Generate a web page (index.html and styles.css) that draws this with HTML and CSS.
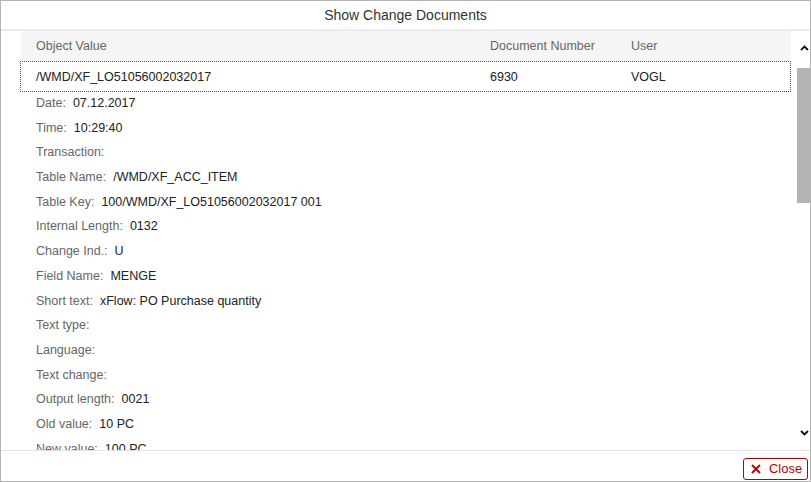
FILE: index.html
```html
<!DOCTYPE html>
<html lang="en">
<head>
    <meta charset="UTF-8">
    <title>Show Change Documents</title>
    <link rel="stylesheet" href="styles.css">
</head>
<body>
    <div class="dialog">
        <div class="dialog-title">Show Change Documents</div>

        <div class="dialog-body">
            <div class="scroll-area">
                <div class="doc-table">
                    <div class="doc-row doc-head">
                        <div class="col-object">Object Value</div>
                        <div class="col-number">Document Number</div>
                        <div class="col-user">User</div>
                    </div>
                    <div class="doc-row doc-selected">
                        <div class="col-object">/WMD/XF_LO51056002032017</div>
                        <div class="col-number">6930</div>
                        <div class="col-user">VOGL</div>
                    </div>
                </div>

                <div class="details">
                    <div class="detail"><span class="label">Date:</span><span class="value">07.12.2017</span></div>
                    <div class="detail"><span class="label">Time:</span><span class="value">10:29:40</span></div>
                    <div class="detail"><span class="label">Transaction:</span><span class="value"></span></div>
                    <div class="detail"><span class="label">Table Name:</span><span class="value">/WMD/XF_ACC_ITEM</span></div>
                    <div class="detail"><span class="label">Table Key:</span><span class="value">100/WMD/XF_LO51056002032017 001</span></div>
                    <div class="detail"><span class="label">Internal Length:</span><span class="value">0132</span></div>
                    <div class="detail"><span class="label">Change Ind.:</span><span class="value">U</span></div>
                    <div class="detail"><span class="label">Field Name:</span><span class="value">MENGE</span></div>
                    <div class="detail"><span class="label">Short text:</span><span class="value">xFlow: PO Purchase quantity</span></div>
                    <div class="detail"><span class="label">Text type:</span><span class="value"></span></div>
                    <div class="detail"><span class="label">Language:</span><span class="value"></span></div>
                    <div class="detail"><span class="label">Text change:</span><span class="value"></span></div>
                    <div class="detail"><span class="label">Output length:</span><span class="value">0021</span></div>
                    <div class="detail"><span class="label">Old value:</span><span class="value">10 PC</span></div>
                    <div class="detail"><span class="label">New value:</span><span class="value">100 PC</span></div>
                    <div class="detail"><span class="label">Unit:</span><span class="value">PC</span></div>
                </div>
            </div>

            <div class="scrollbar">
                <svg class="arrow arrow-up" width="9" height="6" viewBox="0 0 9 6"><path d="M1 5 L4.5 1.5 L8 5" fill="none" stroke="#111" stroke-width="1.8"/></svg>
                <div class="track">
                    <div class="thumb"></div>
                </div>
                <svg class="arrow arrow-down" width="9" height="6" viewBox="0 0 9 6"><path d="M1 1 L4.5 4.5 L8 1" fill="none" stroke="#111" stroke-width="1.8"/></svg>
            </div>
        </div>

        <div class="dialog-footer">
            <button type="button" class="close-button">
                <svg width="10" height="10" viewBox="0 0 10 10"><path d="M1 1 L9 9 M9 1 L1 9" stroke="#c00000" stroke-width="2"/></svg>
                Close
            </button>
        </div>
    </div>
</body>
</html>
```

FILE: styles.css
```css
body {
    margin: 0;
    font-family: "Liberation Sans", Arial, sans-serif;
    font-size: 12.5px;
    color: #222;
    background: white;
}
.dialog {
    width: 811px;
    height: 482px;
    box-sizing: border-box;
    border: 1px solid #b4b4b4;
    display: flex;
    flex-direction: column;
}
.dialog-title {
    height: 28px;
    line-height: 29px;
    text-align: center;
    font-size: 14px;
    color: #333;
    border-bottom: 2px solid #ececec;
}
.dialog-body {
    height: 419px;
    flex-shrink: 0;
    display: flex;
    border-bottom: 1px solid #e3e3e3;
}
.scroll-area {
    flex: 1;
    overflow: hidden;
    padding-left: 19px;
    padding-right: 6px;
}
.doc-head {
    height: 30px;
    background: #f5f5f5;
    color: #666;
    margin-left: 1px;
}
.doc-row {
    display: flex;
    align-items: center;
    padding-left: 15px;
}
.doc-selected {
    height: 29px;
    border: 1px dotted #555;
    padding-left: 15px;
}
.col-object {
    width: 454px;
}
.col-number {
    width: 141px;
}
.details {
    padding-left: 16px;
    margin-top: -1px;
}
.detail {
    height: 24.7px;
    line-height: 24.7px;
}
.label {
    color: #666;
    margin-right: 7px;
}
.value {
    color: #222;
}
.scrollbar {
    width: 13px;
    display: flex;
    flex-direction: column;
    align-items: center;
}
.arrow {
    flex-shrink: 0;
    margin-left: 2px;
}
.arrow-up {
    margin-top: 14px;
    margin-bottom: 17px;
}
.arrow-down {
    margin-top: 6px;
    margin-bottom: 14px;
}
.track {
    flex: 1;
    width: 100%;
}
.thumb {
    height: 135px;
    background: #b3b3b3;
}
.dialog-footer {
    flex: 1;
    display: flex;
    justify-content: flex-end;
    align-items: center;
    padding-right: 2px;
}
.close-button {
    height: 22px;
    width: 65px;
    display: flex;
    align-items: center;
    justify-content: center;
    gap: 8px;
    background: white;
    color: #c00000;
    border: 1px solid #b00000;
    border-radius: 3px;
    font-family: "Liberation Sans", Arial, sans-serif;
    font-size: 13px;
    padding: 0 0 0 2px;
    margin-top: 5px;
}
```
